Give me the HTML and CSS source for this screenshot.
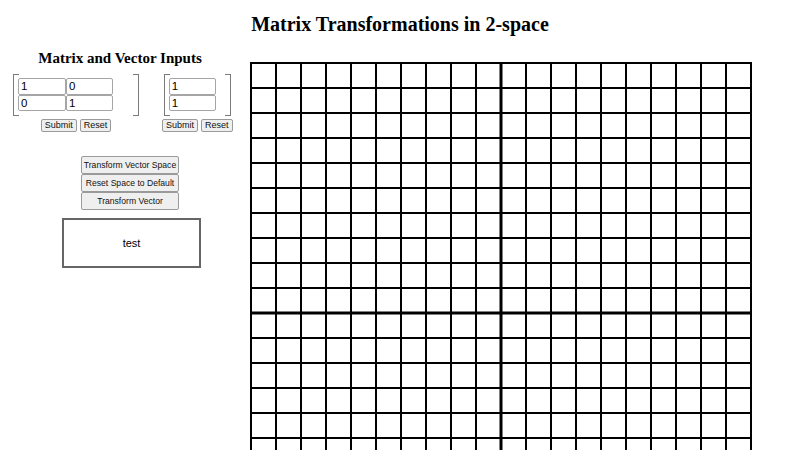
FILE: index.html
```html
<!DOCTYPE html>
<html>
<head>
<meta charset="utf-8">
<title>Matrix Transformations in 2-space</title>
<link rel="stylesheet" href="styles.css">
</head>
<body>
<h1 class="title">Matrix Transformations in 2-space</h1>
<div class="main">
  <div class="panel">
    <h2 class="subtitle">Matrix and Vector Inputs</h2>
    <div class="inputs-row">
      <div class="group matrix-group">
        <div class="bracket matrix">
          <input class="cell" type="text" value="1">
          <input class="cell" type="text" value="0">
          <input class="cell" type="text" value="0">
          <input class="cell" type="text" value="1">
        </div>
        <div class="btn-row">
          <button class="small-btn">Submit</button>
          <button class="small-btn">Reset</button>
        </div>
      </div>
      <div class="group vector-group">
        <div class="bracket vector">
          <input class="cell" type="text" value="1">
          <input class="cell" type="text" value="1">
        </div>
        <div class="btn-row">
          <button class="small-btn">Submit</button>
          <button class="small-btn">Reset</button>
        </div>
      </div>
    </div>
    <div class="actions">
      <button class="action-btn">Transform Vector Space</button>
      <button class="action-btn">Reset Space to Default</button>
      <button class="action-btn">Transform Vector</button>
    </div>
    <div class="output">test</div>
  </div>
  <div class="canvas-wrap">
    <svg class="grid" width="502" height="502" viewBox="0 0 502 502">
      <g stroke="#000" stroke-width="2">
        <line x1="1" y1="0" x2="1" y2="502"/><line x1="26" y1="0" x2="26" y2="502"/>
        <line x1="51" y1="0" x2="51" y2="502"/><line x1="76" y1="0" x2="76" y2="502"/>
        <line x1="101" y1="0" x2="101" y2="502"/><line x1="126" y1="0" x2="126" y2="502"/>
        <line x1="151" y1="0" x2="151" y2="502"/><line x1="176" y1="0" x2="176" y2="502"/>
        <line x1="201" y1="0" x2="201" y2="502"/><line x1="226" y1="0" x2="226" y2="502"/>
        <line x1="276" y1="0" x2="276" y2="502"/><line x1="301" y1="0" x2="301" y2="502"/>
        <line x1="326" y1="0" x2="326" y2="502"/><line x1="351" y1="0" x2="351" y2="502"/>
        <line x1="376" y1="0" x2="376" y2="502"/><line x1="401" y1="0" x2="401" y2="502"/>
        <line x1="426" y1="0" x2="426" y2="502"/><line x1="451" y1="0" x2="451" y2="502"/>
        <line x1="476" y1="0" x2="476" y2="502"/><line x1="501" y1="0" x2="501" y2="502"/>
        <line y1="1" x1="0" y2="1" x2="502"/><line y1="26" x1="0" y2="26" x2="502"/>
        <line y1="51" x1="0" y2="51" x2="502"/><line y1="76" x1="0" y2="76" x2="502"/>
        <line y1="101" x1="0" y2="101" x2="502"/><line y1="126" x1="0" y2="126" x2="502"/>
        <line y1="151" x1="0" y2="151" x2="502"/><line y1="176" x1="0" y2="176" x2="502"/>
        <line y1="201" x1="0" y2="201" x2="502"/><line y1="226" x1="0" y2="226" x2="502"/>
        <line y1="276" x1="0" y2="276" x2="502"/><line y1="301" x1="0" y2="301" x2="502"/>
        <line y1="326" x1="0" y2="326" x2="502"/><line y1="351" x1="0" y2="351" x2="502"/>
        <line y1="376" x1="0" y2="376" x2="502"/><line y1="401" x1="0" y2="401" x2="502"/>
        <line y1="426" x1="0" y2="426" x2="502"/><line y1="451" x1="0" y2="451" x2="502"/>
        <line y1="476" x1="0" y2="476" x2="502"/><line y1="501" x1="0" y2="501" x2="502"/>
      </g>
      <g stroke="#000" stroke-width="3">
        <line x1="251" y1="0" x2="251" y2="502"/>
        <line y1="251" x1="0" y2="251" x2="502"/>
      </g>
    </svg>
  </div>
</div>
</body>
</html>
```

FILE: styles.css
```css
html, body {
  margin: 0;
  padding: 0;
  background: #fff;
  color: #000;
}

body {
  width: 800px;
  height: 450px;
  overflow: hidden;
  font-family: "Liberation Serif", "Times New Roman", serif;
}

.title {
  margin: 12px 0 4px;
  font-size: 20px;
  line-height: 24px;
  font-weight: bold;
  text-align: center;
}

.main {
  display: flex;
  align-items: flex-start;
}

.panel {
  width: 250px;
  flex: none;
}

.subtitle {
  margin: 9px 0 0;
  width: 240px;
  font-size: 15px;
  line-height: 18px;
  font-weight: bold;
  text-align: center;
}

.inputs-row {
  display: flex;
  align-items: flex-start;
  margin-top: 7px;
  padding-left: 13px;
}

.group {
  display: flex;
  flex-direction: column;
  align-items: center;
}

.vector-group {
  margin-left: 23px;
}

.bracket {
  position: relative;
  display: grid;
  padding: 4px 0 5px 5px;
}

.bracket::before,
.bracket::after {
  content: "";
  position: absolute;
  top: 0;
  bottom: 0;
  width: 5px;
  border: 1px solid #7a7a7a;
}

.bracket::before {
  left: 0;
  border-right: none;
}

.bracket::after {
  right: 0;
  border-left: none;
}

.matrix {
  grid-template-columns: 48px 47px;
  padding-right: 26px;
}

.vector {
  grid-template-columns: 47px;
  padding-right: 15px;
}

.cell {
  box-sizing: border-box;
  width: 100%;
  height: 16.5px;
  margin: 0;
  padding: 0 2px;
  border: 1px solid #a5a5a5;
  border-radius: 2px;
  background: #fff;
  font-family: "Liberation Sans", Arial, sans-serif;
  font-size: 11.5px;
  color: #000;
}

.btn-row {
  display: flex;
  gap: 3px;
  margin-top: 3px;
}

.small-btn {
  box-sizing: border-box;
  height: 13px;
  margin: 0;
  padding: 0 3px;
  border: 1px solid #9a9a9a;
  border-radius: 2px;
  background: #efefef;
  font-family: "Liberation Sans", Arial, sans-serif;
  font-size: 9px;
  line-height: 11px;
  color: #111;
}

.actions {
  display: flex;
  flex-direction: column;
  margin: 24px 0 0 81px;
  width: 98px;
}

.action-btn {
  box-sizing: border-box;
  width: 98px;
  height: 18px;
  margin: 0;
  padding: 0;
  border: 1px solid #9a9a9a;
  border-radius: 2px;
  background: #efefef;
  font-family: "Liberation Sans", Arial, sans-serif;
  font-size: 8.6px;
  color: #111;
}

.output {
  box-sizing: border-box;
  width: 139px;
  height: 50px;
  margin: 8px 0 0 62px;
  border: 2px solid #666;
  display: flex;
  align-items: center;
  justify-content: center;
  font-family: "Liberation Sans", Arial, sans-serif;
  font-size: 11px;
}

.canvas-wrap {
  padding-top: 22px;
}

.grid {
  display: block;
}
```
